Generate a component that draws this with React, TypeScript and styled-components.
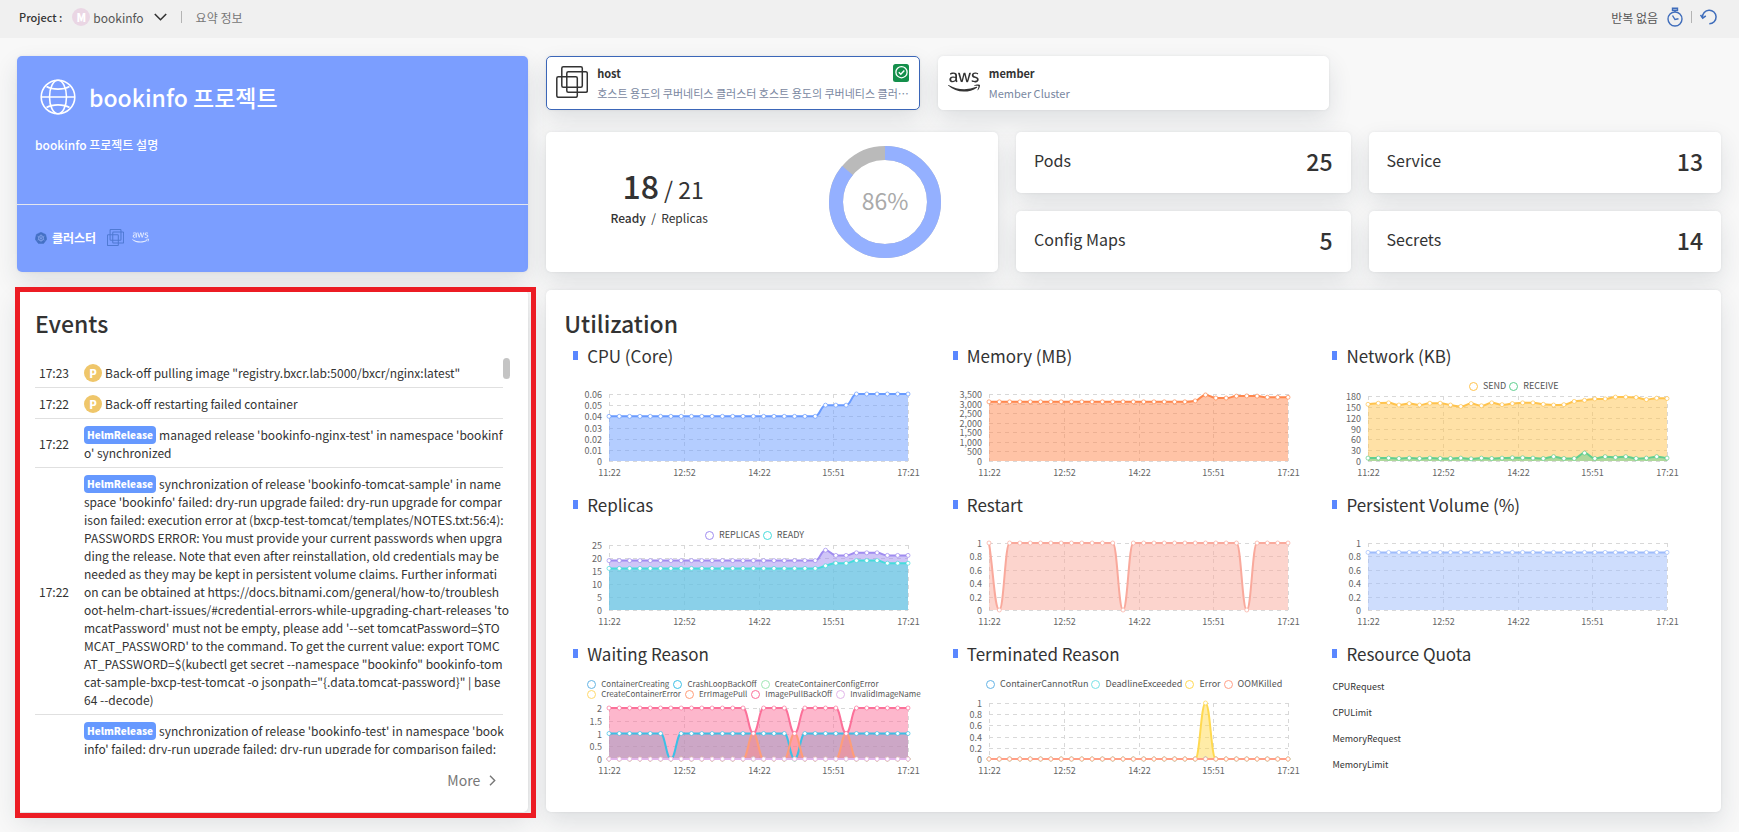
import React, { useLayoutEffect, useRef, useState } from "react";
import styled, { createGlobalStyle } from "styled-components";
import { FaAws } from "react-icons/fa";

const GlobalStyle = createGlobalStyle`
  *, *::before, *::after { box-sizing: border-box; }
  body {
    margin: 0;
    background: #f8f8f8;
    color: #333;
    font-family: "Noto Sans CJK KR", "Noto Sans", sans-serif;
    font-size: 12px;
  }
  h1, h2, h3, p, ul { margin: 0; padding: 0; }
  ul { list-style: none; }
  button { font: inherit; color: inherit; background: none; border: 0; padding: 0; cursor: pointer; }
  a { color: inherit; text-decoration: none; }
  svg { display: block; flex: none; }
`;

/* ---------- header ---------- */

const TopBar = styled.header`
  display: flex;
  align-items: center;
  justify-content: space-between;
  height: 38px;
  padding: 0 22px 4px 19px;
  background: #f0f0f0;
`;

const BarGroup = styled.div<{ $gap: number }>`
  display: flex;
  align-items: center;
  gap: ${(p) => p.$gap}px;
`;

const BarLabel = styled.span`
  font-size: 11px;
  font-weight: 500;
  margin-right: 10px;
`;

const ProjectPicker = styled.button`
  display: flex;
  align-items: center;
  gap: 3px;
  color: #555;
  svg { margin-left: 7px; }
`;

const Divider = styled.span`
  width: 1px;
  height: 12px;
  background: #b4b4b4;
`;

const Crumb = styled.span`
  color: #777;
`;

const BarButton = styled.button`
  display: flex;
  align-items: center;
  gap: 9px;
  color: #555;
`;

const Round = styled.span<{ $color: string }>`
  display: inline-block;
  width: 18px;
  height: 18px;
  border-radius: 9px;
  background: ${(p) => p.$color};
  color: #fff;
  font-size: 11px;
  line-height: 18px;
  font-weight: 900;
  text-align: center;
`;

/* ---------- page ---------- */

const Page = styled.main`
  display: grid;
  grid-template-columns: minmax(0, 30fr) minmax(0, 70fr);
  padding: 18px 18px 20px 17px;
  row-gap: 18px;
`;

const Card = styled.section`
  background: #fff;
  border-radius: 5px;
  box-shadow: 0 0 3px rgba(36, 46, 66, 0.08), 0 10px 24px rgba(36, 46, 66, 0.12);
`;

const ProjectCard = styled(Card)`
  background: #7b9eff;
  color: #fff;
  height: 216px;
  display: flex;
  flex-direction: column;
`;

const ProjectMain = styled.div`
  flex: 1;
  padding: 22px 18px 0;
  border-bottom: 1px solid #e4e6ee;
`;

const ProjectName = styled.div`
  display: flex;
  align-items: center;
  gap: 13px;
  padding-left: 5px;
  height: 38px;
  h1 {
    font-size: 23px;
    line-height: 36px;
    font-weight: 500;
  }
`;

const ProjectNote = styled.p`
  margin-top: 20px;
  font-weight: 500;
  line-height: 18px;
`;

const ClusterLine = styled.div`
  display: flex;
  align-items: center;
  gap: 8px;
  height: 67px;
  padding: 0 18px 2px;
  strong {
    font-weight: 700;
    margin: 0 3px 0 -3px;
  }
`;

const RightColumn = styled.div`
  margin-left: 18px;
  display: flex;
  flex-direction: column;
  gap: 22px;
  min-width: 0;
`;

const ClusterRow = styled.div`
  display: grid;
  grid-template-columns: repeat(3, minmax(0, 1fr));
`;

const ClusterCard = styled.button<{ $selected?: boolean }>`
  display: flex;
  gap: 9px;
  height: 54px;
  padding: 6px 10px 0 9px;
  margin-right: ${(p) => (p.$selected ? 18 : 0)}px;
  text-align: left;
  background: #fff;
  border: 1px solid ${(p) => (p.$selected ? "#3b66b8" : "#fff")};
  border-radius: 5px;
  box-shadow: 0 0 3px rgba(36, 46, 66, 0.08), 0 10px 24px rgba(36, 46, 66, 0.12);
  > svg { margin-top: 3px; }
`;

const ClusterText = styled.span`
  flex: 1;
  min-width: 0;
  display: flex;
  flex-direction: column;
  gap: 1px;
  font-size: 11px;
  line-height: 18px;
`;

const ClusterTitle = styled.span`
  display: flex;
  justify-content: space-between;
  align-items: center;
  font-weight: 700;
  height: 20px;
`;

const ClusterNote = styled.span`
  margin-right: -8px;
  color: #79879f;
  overflow: hidden;
  white-space: nowrap;
  text-overflow: ellipsis;
`;

const StatRow = styled.div`
  display: grid;
  grid-template-columns: 40fr 30fr 30fr;
`;

const ReadyCard = styled(Card)`
  margin-right: 18px;
  height: 140px;
  display: grid;
  grid-template-columns: 1fr 1fr;
  place-items: center;
`;

const ReadyCount = styled.div`
  padding-bottom: 10px;
  text-align: center;
  white-space: pre;
  p { line-height: 20px; }
  b { font-weight: 500; }
`;

const BigCount = styled.div`
  padding-left: 8px;
  font-size: 23px;
  line-height: 38px;
  b { font-size: 32px; }
`;

const StatPair = styled.div<{ $last?: boolean }>`
  display: grid;
  gap: 18px;
  margin-right: ${(p) => (p.$last ? 0 : 18)}px;
`;

const StatCard = styled(Card)`
  display: flex;
  justify-content: space-between;
  padding: 0 18px;
  font-size: 16px;
  line-height: 56px;
  b {
    font-size: 23px;
    line-height: 58px;
    height: 60px;
    font-weight: 500;
  }
`;

const CardHeading = styled.h2`
  font-size: 23px;
  line-height: 36px;
  font-weight: 500;
`;

/* ---------- events ---------- */

const EventsCard = styled(Card)`
  position: relative;
  padding: 15px 18px 6px;
`;

const Highlight = styled.div`
  position: absolute;
  inset: -3px -8px -6px -2px;
  border: 5px solid #ec1c24;
  pointer-events: none;
`;

const Scroller = styled.div`
  position: relative;
  height: 397px;
  margin-top: 16px;
  overflow: hidden;
`;

const EventList = styled.ul`
  margin-right: 7px;
`;

const Thumb = styled.span`
  position: absolute;
  top: 1px;
  right: 0;
  width: 7px;
  height: 21px;
  border-radius: 4px;
  background: #c4c4c4;
`;

const EventRow = styled.li`
  display: flex;
  align-items: center;
  border-bottom: 1px solid #e0e0e0;
  padding: 7px 0 5px 4px;
  line-height: 18px;
  time {
    flex: none;
    width: 45px;
  }
`;

const EventText = styled.p`
  flex: 1;
  min-width: 0;
  white-space: pre;
`;

const EventIcon = styled(Round)`
  vertical-align: top;
  margin-right: 3px;
`;

const KindTag = styled.span`
  display: inline-block;
  height: 18px;
  vertical-align: top;
  padding: 0 3px;
  margin-right: 3px;
  border-radius: 4px;
  background: #6699ff;
  color: #fff;
  font-size: 10px;
  line-height: 18px;
  font-weight: 900;
`;

const EventsFooter = styled.div`
  display: flex;
  justify-content: flex-end;
  align-items: center;
  height: 52px;
  padding-right: 14px;
  a {
    display: flex;
    align-items: center;
    gap: 9px;
    font-size: 14px;
    color: #777;
  }
`;

/* ---------- utilization ---------- */

const UtilCard = styled(Card)`
  margin-left: 18px;
  padding: 15px 18px 20px;
  min-width: 0;
`;

const ChartGrid = styled.div`
  display: grid;
  grid-template-columns: repeat(3, minmax(0, 1fr));
  gap: 13px 0;
  margin-top: 2px;
`;

const ChartTitle = styled.h3`
  display: flex;
  align-items: center;
  gap: 9px;
  height: 24px;
  padding-left: 9px;
  font-size: 17px;
  font-weight: 400;
  &::before {
    content: "";
    width: 5px;
    height: 9px;
    background: #5a87ff;
  }
`;

const ChartBody = styled.div`
  display: flex;
  flex-direction: column;
  justify-content: space-between;
  height: 102px;
  margin-top: 10px;
`;

const Legend = styled.ul<{ $wide?: boolean }>`
  display: flex;
  flex-wrap: wrap;
  justify-content: ${(p) => (p.$wide ? "flex-start" : "center")};
  gap: 0 ${(p) => (p.$wide ? 4 : 3)}px;
  padding: 4px 0 0 ${(p) => (p.$wide ? 23 : 1)}px;
  color: #555;
  font-size: ${(p) => (p.$wide ? 8 : 9)}px;
  line-height: 10px;
  white-space: nowrap;
`;

const LegendItem = styled.li<{ $color: string }>`
  display: flex;
  align-items: center;
  gap: 5px;
  &::before {
    content: "";
    width: 9px;
    height: 9px;
    border: 1px solid ${(p) => p.$color};
    border-radius: 5px;
  }
`;

const QuotaList = styled.ul`
  padding: 5px 0 0 9px;
  font-size: 9px;
  li { height: 26px; line-height: 14px; }
  li:last-child { height: 14px; }
`;

interface Series {
  name: string;
  color: string;
  data: number[];
}

interface ChartSpec {
  title: string;
  ticks: string[];
  max: number;
  plot: number;
  series: Series[];
  legend?: "normal" | "wide";
}

const N = 30;
const flat = (v: number, at: Record<number, number> = {}) =>
  Array.from({ length: N }, (_, i) => (i in at ? at[i] : v));
const late = (v: number, tail: number[]) => [...Array(N - tail.length).fill(v), ...tail];

const charts: ChartSpec[] = [
  {
    title: "CPU (Core)", max: 0.06, plot: 67,
    ticks: ["0", "0.01", "0.02", "0.03", "0.04", "0.05", "0.06"],
    series: [{ name: "CPU", color: "#699bff", data: late(0.04, [0.05, 0.05, 0.05, 0.06, 0.06, 0.06, 0.06, 0.06, 0.06]) }],
  },
  {
    title: "Memory (MB)", max: 3500, plot: 67,
    ticks: ["0", "500", "1,000", "1,500", "2,000", "2,500", "3,000", "3,500"],
    series: [{ name: "Memory", color: "#ff874d", data: late(3090, [3140, 3450, 3290, 3290, 3390, 3400, 3390, 3330, 3330, 3330]) }],
  },
  {
    title: "Network (KB)", max: 180, plot: 65, legend: "normal",
    ticks: ["0", "30", "60", "90", "120", "150", "180"],
    series: [
      { name: "SEND", color: "#ffc34d", data: [157, 160, 161, 155, 159, 155, 160, 160, 155, 151, 159, 153, 161, 156, 159, 161, 161, 157, 155, 156, 165, 168, 172, 172, 177, 177, 176, 170, 174, 173] },
      { name: "RECEIVE", color: "#5fcf8f", data: [8, 8, 8, 7, 8, 7, 8, 7, 7, 8, 6, 8, 7, 8, 9, 9, 8, 7, 12, 7, 7, 22, 7, 12, 10, 12, 7, 8, 12, 8] },
    ],
  },
  {
    title: "Replicas", max: 25, plot: 65, legend: "normal",
    ticks: ["0", "5", "10", "15", "20", "25"],
    series: [
      { name: "REPLICAS", color: "#a08cf0", data: late(19, [23, 21, 21, 22, 22, 22, 21, 21, 21]) },
      { name: "READY", color: "#46dcdc", data: late(16, [17, 18, 18, 19, 19, 19, 18, 18, 18]) },
    ],
  },
  {
    title: "Restart", max: 1, plot: 67,
    ticks: ["0", "0.2", "0.4", "0.6", "0.8", "1"],
    series: [{ name: "Restart", color: "#f9a99c", data: flat(1, { 1: 0, 13: 0, 25: 0 }) }],
  },
  {
    title: "Persistent Volume (%)", max: 1, plot: 67,
    ticks: ["0", "0.2", "0.4", "0.6", "0.8", "1"],
    series: [{ name: "Volume", color: "#9ebcfb", data: flat(0.86) }],
  },
  {
    title: "Waiting Reason", max: 2, plot: 51, legend: "wide",
    ticks: ["0", "0.5", "1", "1.5", "2"],
    series: [
      { name: "ContainerCreating", color: "#64b4e6", data: flat(0) },
      { name: "CrashLoopBackOff", color: "#3cc0e6", data: flat(1, { 6: 0, 18: 0 }) },
      { name: "CreateContainerConfigError", color: "#a0e6b4", data: flat(0) },
      { name: "CreateContainerError", color: "#ffd96b", data: flat(0) },
      { name: "ErrImagePull", color: "#ff9d78", data: flat(0, { 14: 1, 18: 1, 23: 1 }) },
      { name: "ImagePullBackOff", color: "#fb7099", data: flat(2, { 14: 1, 18: 1, 23: 1 }) },
      { name: "InvalidImageName", color: "#e2b5ea", data: flat(0) },
    ],
  },
  {
    title: "Terminated Reason", max: 1, plot: 56, legend: "normal",
    ticks: ["0", "0.2", "0.4", "0.6", "0.8", "1"],
    series: [
      { name: "ContainerCannotRun", color: "#64b4e6", data: flat(0) },
      { name: "DeadlineExceeded", color: "#78e1e6", data: flat(0) },
      { name: "Error", color: "#ffd950", data: flat(0, { 21: 1 }) },
      { name: "OOMKilled", color: "#ff9f86", data: flat(0) },
    ],
  },
];

const times = ["11:22", "12:52", "14:22", "15:51", "17:21"];
const PAD = { left: 45, right: 36, top: 5, bottom: 18 };

// Smooth curve through evenly spaced points: tangents vanish at local extremes.
function curve(pts: [number, number][]) {
  const n = pts.length;
  const dx = pts[1][0] - pts[0][0];
  const h = dx * 0.45;
  const d = pts.slice(1).map((p, i) => (p[1] - pts[i][1]) / dx);
  const m = pts.map((_, i) => {
    if (i === 0) return d[0];
    if (i === n - 1) return d[n - 2];
    const a = d[i - 1];
    const b = d[i];
    return a * b <= 0 ? 0 : (2 * a * b) / (a + b);
  });
  let path = `M${pts[0][0]},${pts[0][1]}`;
  for (let i = 1; i < n; i++) {
    const [x0, y0] = pts[i - 1];
    const [x1, y1] = pts[i];
    path += `C${x0 + h},${y0 + m[i - 1] * h} ${x1 - h},${y1 - m[i] * h} ${x1},${y1}`;
  }
  return path;
}

function AreaChart({ spec }: { spec: ChartSpec }) {
  const box = useRef<HTMLDivElement>(null);
  const [width, setWidth] = useState(380);
  useLayoutEffect(() => {
    const el = box.current;
    if (!el) return;
    const measure = () => setWidth(Math.round(el.clientWidth));
    measure();
    const ro = new ResizeObserver(measure);
    ro.observe(el);
    return () => ro.disconnect();
  }, []);

  const x0 = PAD.left;
  const x1 = width - PAD.right;
  const base = PAD.top + spec.plot;
  const px = (i: number) => x0 + ((x1 - x0) * i) / (N - 1);
  const py = (v: number) => base - (spec.plot * v) / spec.max;
  const lines = spec.series.map((s) => {
    const pts = s.data.map((v, i): [number, number] => [px(i), py(v)]);
    return { ...s, pts, d: curve(pts) };
  });
  const grid = { stroke: "#d8d8d8", strokeWidth: 1, strokeDasharray: "4 4" };

  return (
    <div ref={box}>
      <svg width={width} height={base + PAD.bottom} role="img" aria-label={spec.title}>
        {spec.ticks.map((t, i) => {
          const y = Math.round(base - (spec.plot * i) / (spec.ticks.length - 1)) + 0.5;
          return (
            <g key={t}>
              <line x1={x0} x2={x1} y1={y} y2={y} {...grid} />
              <text x={x0 - 7} y={y + 3} fontSize={9} fill="#666" textAnchor="end">{t}</text>
            </g>
          );
        })}
        {times.map((t, i) => {
          const x = Math.round(x0 + ((x1 - x0) * i) / 4) + 0.5;
          return (
            <g key={t}>
              <line x1={x} x2={x} y1={PAD.top} y2={base} {...grid} />
              <text x={x} y={base + 15} fontSize={9} fill="#666" textAnchor="middle">{t}</text>
            </g>
          );
        })}
        {lines.map((s) => (
          <path key={s.name} d={`${s.d}L${x1},${base}L${x0},${base}Z`} fill={s.color} fillOpacity={0.5} />
        ))}
        {lines.map((s) => (
          <g key={s.name} stroke={s.color} fill="#fff">
            <path d={s.d} fill="none" strokeWidth={2} />
            {s.pts.map(([x, y], i) => (
              <circle key={i} cx={x} cy={y} r={2} strokeWidth={1} strokeOpacity={0.7} />
            ))}
          </g>
        ))}
      </svg>
    </div>
  );
}

/* ---------- icons ---------- */

const BoxesIcon = ({ size, color, weight }: { size: number; color: string; weight: number }) => (
  <svg width={size} height={size} viewBox="0 0 32 32" fill="none" stroke={color} strokeWidth={weight}>
    <rect x="5.8" y="0.8" width="20.5" height="20.5" rx="1.5" />
    <rect x="10.8" y="5.8" width="20.5" height="20.5" rx="1.5" />
    <rect x="0.8" y="10.8" width="20.5" height="20.5" rx="1.5" />
  </svg>
);

const GlobeIcon = () => (
  <svg width="36" height="36" viewBox="0 0 36 36" fill="none" stroke="#fff" strokeWidth="1.6">
    <circle cx="18" cy="18" r="16.8" />
    <ellipse cx="18" cy="18" rx="8.5" ry="16.8" />
    <path d="M1.2 18h33.6M6.500 7.500c6 3.500 17 3.500 23 0M6.500 28.500c6-3.500 17-3.500 23 0" />
  </svg>
);

const WheelIcon = () => (
  <svg width="12" height="12" viewBox="0 0 12 12">
    <path d="M6 .2l4.600 2.200 1.200 4.800-3.200 4.300H3.400L.2 7.200l1.200-4.800z" fill="#4470c4" stroke="#4470c4" strokeLinejoin="round" strokeWidth=".5" />
    <circle cx="6" cy="6.200" r="2.600" fill="none" stroke="#8fadf5" strokeWidth=".7" />
    <path d="M6 2.200v8M2.500 4.200l7 4M9.500 4.200l-7 4" stroke="#8fadf5" strokeWidth=".5" />
  </svg>
);

const Check = () => (
  <svg width="16" height="18" viewBox="0 0 16 18" fill="none">
    <rect width="16" height="18" rx="2.500" fill="#148f4b" />
    <circle cx="8.500" cy="8.200" r="5.600" stroke="#fff" strokeWidth="1.300" />
    <path d="M5.800 8.300l2 2 3.500-3.800" stroke="#fff" strokeWidth="1.400" />
  </svg>
);

const ChevronDown = () => (
  <svg width="13" height="8" viewBox="0 0 13 8" fill="none" stroke="#333" strokeWidth="1.600">
    <path d="M.8 1l5.700 5.700L12.200 1" />
  </svg>
);

const ChevronRight = () => (
  <svg width="7" height="11" viewBox="0 0 7 11" fill="none" stroke="#777" strokeWidth="1.400">
    <path d="M1 .8l4.700 4.700L1 10.200" />
  </svg>
);

const StopwatchIcon = () => (
  <svg width="16" height="20" viewBox="0 0 16 20" fill="none" stroke="#3f6dbb" strokeWidth="1.400">
    <circle cx="8" cy="12" r="7" />
    <path d="M5.500 1.300h5v2h-5zM8 3.500V5M5.500 8.500l2.500 4 3.500-.8" />
  </svg>
);

const ResetIcon = () => (
  <svg width="17" height="16" viewBox="0 0 17 16" fill="none" stroke="#3f6dbb" strokeWidth="1.500">
    <path d="M2.500 8.500a6.800 6.800 0 1 1 6.800 6.300" />
    <path d="M.5 6l2.200 3.200L5.800 6.800" />
  </svg>
);

/* ---------- content ---------- */

interface EventItem {
  time: string;
  kind: "P" | "HelmRelease";
  lines: string[];
}

const events: EventItem[] = [
  { time: "17:23", kind: "P", lines: ['Back-off pulling image "registry.bxcr.lab:5000/bxcr/nginx:latest"'] },
  { time: "17:22", kind: "P", lines: ["Back-off restarting failed container"] },
  {
    time: "17:22",
    kind: "HelmRelease",
    lines: ["managed release 'bookinfo-nginx-test' in namespace 'bookinf", "o' synchronized"],
  },
  {
    time: "17:22",
    kind: "HelmRelease",
    lines: [
      "synchronization of release 'bookinfo-tomcat-sample' in name",
      "space 'bookinfo' failed: dry-run upgrade failed: dry-run upgrade for compar",
      "ison failed: execution error at (bxcp-test-tomcat/templates/NOTES.txt:56:4):",
      "PASSWORDS ERROR: You must provide your current passwords when upgra",
      "ding the release. Note that even after reinstallation, old credentials may be",
      "needed as they may be kept in persistent volume claims. Further informati",
      "on can be obtained at https://docs.bitnami.com/general/how-to/troublesh",
      "oot-helm-chart-issues/#credential-errors-while-upgrading-chart-releases 'to",
      "mcatPassword' must not be empty, please add '--set tomcatPassword=$TO",
      "MCAT_PASSWORD' to the command. To get the current value: export TOMC",
      "AT_PASSWORD=$(kubectl get secret --namespace \"bookinfo\" bookinfo-tom",
      "cat-sample-bxcp-test-tomcat -o jsonpath=\"{.data.tomcat-password}\" | base",
      "64 --decode)",
    ],
  },
  {
    time: "17:22",
    kind: "HelmRelease",
    lines: [
      "synchronization of release 'bookinfo-test' in namespace 'book",
      "info' failed: dry-run upgrade failed: dry-run upgrade for comparison failed:",
      "execution error at (bxcp-test-tomcat/templates/NOTES.txt:56:4):",
      "PASSWORDS ERROR: You must provide your current passwords when upgra",
      "ding the release. Note that even after reinstallation, old credentials may be",
      "needed as they may be kept in persistent volume claims.",
    ],
  },
];

const stats = [
  [["Pods", 25], ["Config Maps", 5]],
  [["Service", 13], ["Secrets", 14]],
] as const;

function Donut({ percent }: { percent: number }) {
  const r = 49;
  const c = 2 * Math.PI * r;
  return (
    <svg width="114" height="114" viewBox="-57 -57 114 114">
      <circle r={r} fill="none" stroke="#bababa" strokeWidth="14" />
      <circle r={r} fill="none" stroke="#94b0ff" strokeWidth="14" strokeDasharray={`${(c * percent) / 100} ${c}`} transform="rotate(-90)" />
      <text y="8" textAnchor="middle" fontSize="23" fill="#aaa">{percent}%</text>
    </svg>
  );
}

export default function App() {
  return (
    <>
      <GlobalStyle />
      <TopBar>
        <BarGroup $gap={0}>
          <BarLabel>Project :</BarLabel>
          <BarGroup $gap={14}>
            <ProjectPicker type="button">
              <Round $color="#ead6e4">M</Round>
              bookinfo
              <ChevronDown />
            </ProjectPicker>
            <Divider />
            <Crumb>요약 정보</Crumb>
          </BarGroup>
        </BarGroup>
        <BarGroup $gap={8}>
          <BarButton type="button">반복 없음<StopwatchIcon /></BarButton>
          <Divider />
          <BarButton type="button" aria-label="Refresh"><ResetIcon /></BarButton>
        </BarGroup>
      </TopBar>
      <Page>
        <ProjectCard>
          <ProjectMain>
            <ProjectName>
              <GlobeIcon />
              <h1>bookinfo 프로젝트</h1>
            </ProjectName>
            <ProjectNote>bookinfo 프로젝트 설명</ProjectNote>
          </ProjectMain>
          <ClusterLine>
            <WheelIcon />
            <strong>클러스터</strong>
            <BoxesIcon size={17} color="#4f79d3" weight={2} />
            <FaAws size={17} color="#e8eefe" />
          </ClusterLine>
        </ProjectCard>

        <RightColumn>
          <ClusterRow>
            <ClusterCard type="button" $selected>
              <BoxesIcon size={32} color="#333" weight={1.5} />
              <ClusterText>
                <ClusterTitle>host<Check /></ClusterTitle>
                <ClusterNote>호스트 용도의 쿠버네티스 클러스터 호스트 용도의 쿠버네티스 클러스터</ClusterNote>
              </ClusterText>
            </ClusterCard>
            <ClusterCard type="button">
              <FaAws size={32} color="#333" />
              <ClusterText>
                <ClusterTitle>member</ClusterTitle>
                <ClusterNote>Member Cluster</ClusterNote>
              </ClusterText>
            </ClusterCard>
          </ClusterRow>
          <StatRow>
            <ReadyCard>
              <ReadyCount>
                <BigCount><b>18</b> / 21</BigCount>
                <p><b>Ready</b>{"  /  "}Replicas</p>
              </ReadyCount>
              <Donut percent={86} />
            </ReadyCard>
            {stats.map((pair, i) => (
              <StatPair key={i} $last={i === 1}>
                {pair.map(([label, value]) => (
                  <StatCard key={label}>{label}<b>{value}</b></StatCard>
                ))}
              </StatPair>
            ))}
          </StatRow>
        </RightColumn>

        <EventsCard>
          <CardHeading>Events</CardHeading>
          <Scroller>
            <EventList>
              {events.map((e, i) => (
                <EventRow key={i}>
                  <time>{e.time}</time>
                  <EventText>
                    {e.kind === "P" ? <EventIcon $color="#efc66a">P</EventIcon> : <KindTag>{e.kind}</KindTag>}
                    {e.lines.join("\n")}
                  </EventText>
                </EventRow>
              ))}
            </EventList>
            <Thumb />
          </Scroller>
          <EventsFooter>
            <a href="#events">More<ChevronRight /></a>
          </EventsFooter>
          <Highlight />
        </EventsCard>

        <UtilCard>
          <CardHeading>Utilization</CardHeading>
          <ChartGrid>
            {charts.map((spec) => (
              <div key={spec.title}>
                <ChartTitle>{spec.title}</ChartTitle>
                <ChartBody>
                  {spec.legend ? (
                    <Legend $wide={spec.legend === "wide"}>
                      {spec.series.map((s) => (
                        <LegendItem key={s.name} $color={s.color}>{s.name}</LegendItem>
                      ))}
                    </Legend>
                  ) : <span />}
                  <AreaChart spec={spec} />
                </ChartBody>
              </div>
            ))}
            <div>
              <ChartTitle>Resource Quota</ChartTitle>
              <ChartBody>
                <QuotaList>
                  <li>CPURequest</li>
                  <li>CPULimit</li>
                  <li>MemoryRequest</li>
                  <li>MemoryLimit</li>
                </QuotaList>
              </ChartBody>
            </div>
          </ChartGrid>
        </UtilCard>
      </Page>
    </>
  );
}
